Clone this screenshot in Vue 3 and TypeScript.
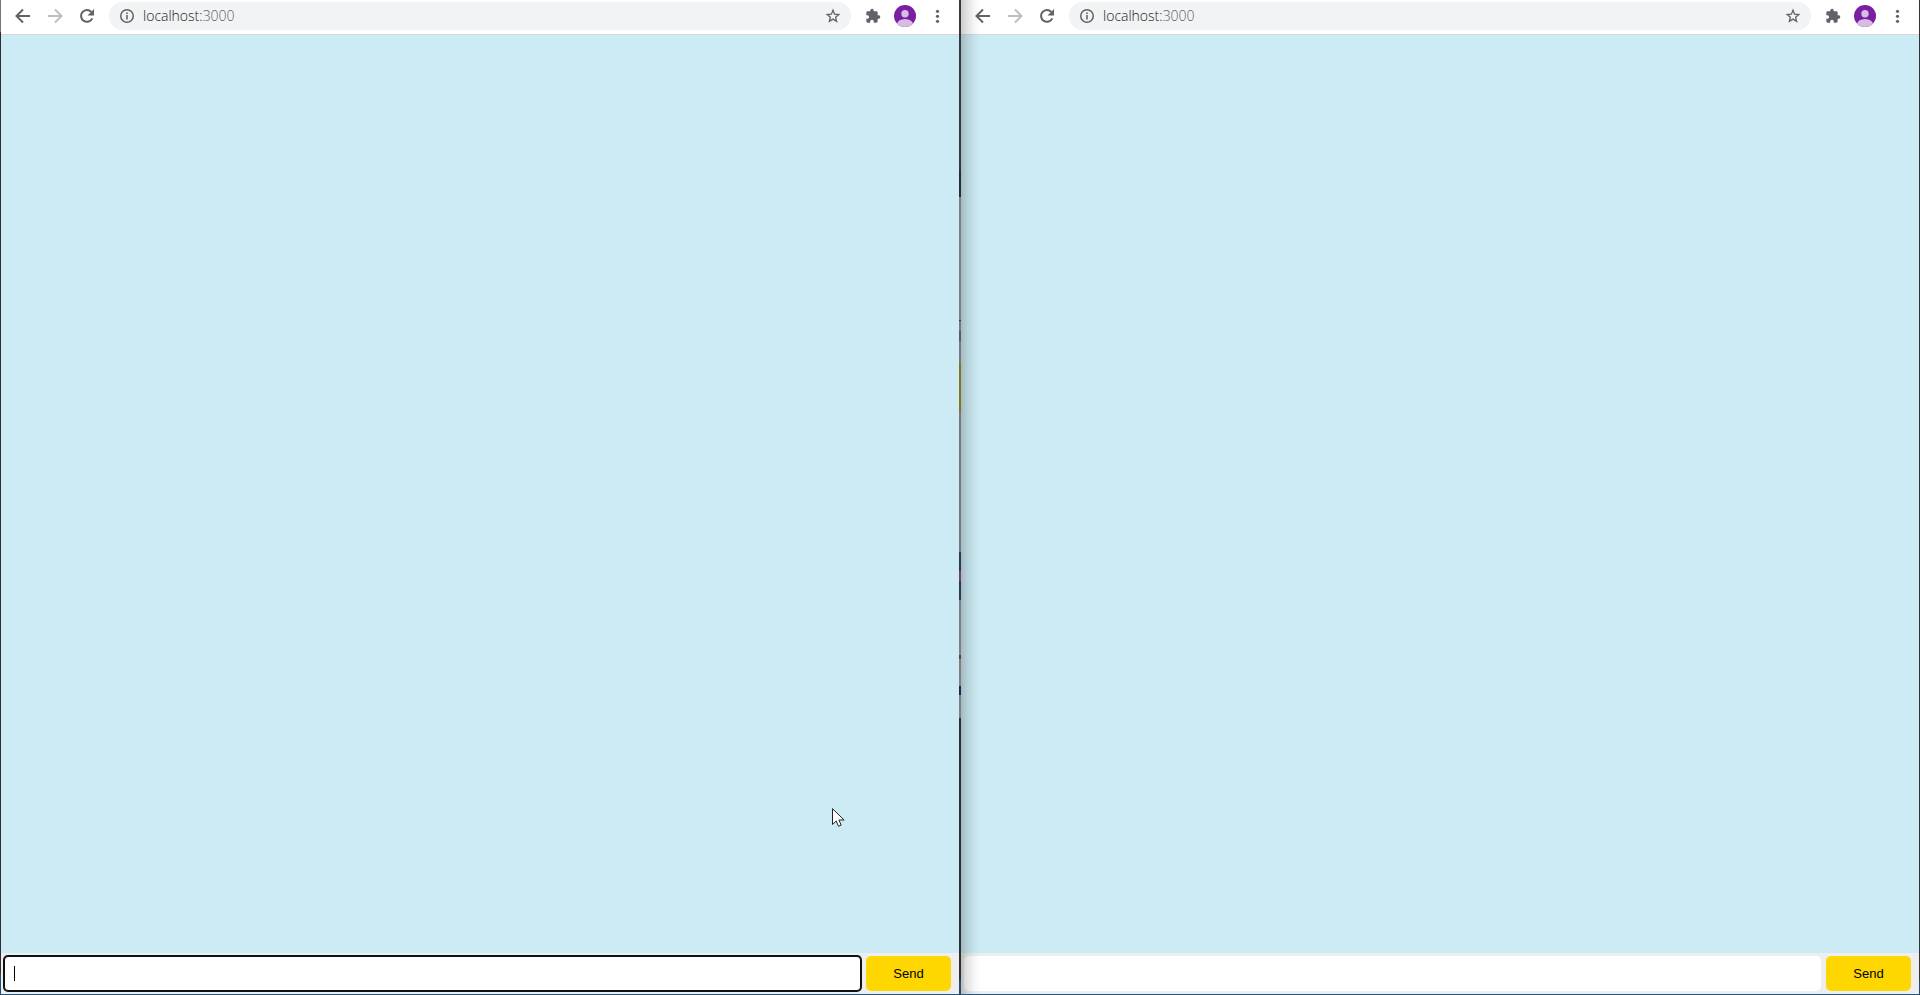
<script setup lang="ts">
import { ref } from 'vue'

interface Pane {
  id: string
  focused: boolean
}

const panes: Pane[] = [
  { id: 'left', focused: true },
  { id: 'right', focused: false },
]
const drafts = ref<Record<string, string>>({ left: '', right: '' })

function send(id: string) {
  drafts.value[id] = ''
}
</script>

<template>
  <main class="desktop">
    <section v-for="pane in panes" :key="pane.id" class="window" :class="pane.id">
      <header class="toolbar">
        <button class="tool" type="button" aria-label="Back">
          <svg width="20" height="20" viewBox="0 0 20 20"><path d="M17 10H4M10 3.5 3.5 10l6.500 6.500" fill="none" stroke="#5f6368" stroke-width="2" /></svg>
        </button>
        <button class="tool" type="button" aria-label="Forward" disabled>
          <svg width="20" height="20" viewBox="0 0 20 20"><path d="M3 10h13M10 3.500l6.500 6.500-6.500 6.500" fill="none" stroke="#bdbfc1" stroke-width="2" /></svg>
        </button>
        <button class="tool" type="button" aria-label="Reload">
          <svg width="20" height="20" viewBox="0 0 20 20"><path d="M15.300 12.300A5.900 5.900 0 1 1 14.300 5.900" fill="none" stroke="#5f6368" stroke-width="2" /><path d="M17 3v6.500h-6.500z" fill="#5f6368" /></svg>
        </button>
        <div class="address">
          <svg width="16" height="16" viewBox="0 0 16 16"><circle cx="8" cy="8" r="6.250" fill="none" stroke="#5f6368" stroke-width="1.500" /><path d="M7.200 7h1.600v4.500H7.200zM7.200 4.500h1.600V6H7.200z" fill="#5f6368" /></svg>
          <span class="url">localhost:<span class="port">3000</span></span>
          <button class="star" type="button" aria-label="Bookmark this page">
            <svg width="16" height="16" viewBox="0 0 16 16"><path d="m8 2.300 1.600 3.900 4.200.3-3.200 2.700 1 4.100L8 11.100l-3.600 2.200 1-4.100-3.200-2.700 4.200-.3z" fill="none" stroke="#5f6368" stroke-width="1.300" /></svg>
          </button>
        </div>
        <button class="tool" type="button" aria-label="Extensions">
          <svg width="16" height="16" viewBox="0 0 24 24"><path d="M20.500 11H19V7c0-1.100-.9-2-2-2h-4V3.500a2.500 2.500 0 0 0-5 0V5H4c-1.100 0-2 .9-2 2v3.800h1.500a2.700 2.700 0 0 1 0 5.400H2V20c0 1.100.9 2 2 2h3.800v-1.500a2.700 2.700 0 0 1 5.400 0V22H17c1.100 0 2-.9 2-2v-4h1.500a2.500 2.500 0 0 0 0-5z" fill="#5f6368" /></svg>
        </button>
        <button class="tool" type="button" aria-label="Profile">
          <svg width="22" height="22" viewBox="0 0 22 22">
            <clipPath :id="`avatar-${pane.id}`"><circle cx="11" cy="11" r="11" /></clipPath>
            <g :clip-path="`url(#avatar-${pane.id})`"><path d="M0 0h22v22H0z" fill="#7b1fa2" /><circle cx="11" cy="8.700" r="3.700" fill="#d7bce3" /><ellipse cx="11" cy="19.500" rx="8" ry="5.500" fill="#d7bce3" /></g>
          </svg>
        </button>
        <button class="tool" type="button" aria-label="Menu">
          <svg width="16" height="16" viewBox="0 0 16 16" fill="#5f6368"><circle cx="8.500" cy="3.300" r="1.600" /><circle cx="8.500" cy="8.300" r="1.600" /><circle cx="8.500" cy="13.300" r="1.600" /></svg>
        </button>
      </header>
      <div class="messages"></div>
      <form class="composer" @submit.prevent="send(pane.id)">
        <div class="field">
          <input v-model="drafts[pane.id]" class="message" :class="{ focused: pane.focused }" type="text" autocomplete="off" aria-label="Message" />
          <span v-if="pane.focused" class="caret"></span>
        </div>
        <button class="send" type="submit">Send</button>
      </form>
    </section>
    <svg class="pointer" width="14" height="21" viewBox="0 0 14 21"><path d="M.5.700v15.800l3.700-3.500 2.300 5.300 2.700-1.200-2.300-5.100h5.200z" fill="#fff" stroke="#222" /></svg>
  </main>
</template>

<style>
body {
  margin: 0;
}
</style>

<style scoped>
.desktop {
  position: relative;
  display: grid;
  grid-template-columns: 1fr 1fr;
  gap: 2px;
  box-sizing: border-box;
  height: 100vh;
  padding: 0 1px 1px;
  overflow: hidden;
  background:
    linear-gradient(#777 0 32px, #2e2e30 32px 973px, #1f4b70 973px) left / 1px 100% no-repeat,
    linear-gradient(#333 0 980px, #1f4b70 980px) right / 1px 100% no-repeat,
    linear-gradient(
      #38383a 0 170px, #292c30 170px 197px, #827f7e 197px 320px, #33365f 320px 321px,
      #77787c 321px 331px, #555c70 331px 341px, #77787c 341px 363px, #86741a 363px 412px,
      #777 412px 552px, #2d3654 552px 571px, #75405f 571px 581px, #2d3654 581px 600px,
      #827f7e 600px 655px, #783535 655px 659px, #827f7e 659px 686px, #1c294c 686px 695px,
      #827f7e 695px 718px, #2c2e30 718px 980px, #1f4b70 980px
    ) center / 2px 100% no-repeat,
    #23587f;
}

.window {
  position: relative;
  display: flex;
  flex-direction: column;
  min-width: 0;
  background: #cdebf5;
}

.right::before {
  content: '';
  position: absolute;
  z-index: 1;
  inset: 0 auto 0 0;
  width: 20px;
  background: linear-gradient(90deg, rgba(0, 0, 0, 0.2), rgba(0, 0, 0, 0.1) 35%, rgba(0, 0, 0, 0.03) 70%, transparent);
  pointer-events: none;
}

.toolbar {
  display: flex;
  align-items: center;
  gap: 4px;
  box-sizing: border-box;
  height: 35px;
  padding: 0 8px 2px;
  border-bottom: 1px solid #d5d9dc;
  background: #fff;
}

button {
  margin: 0;
  padding: 0;
  border: 0;
  background: none;
}

.tool {
  display: grid;
  place-items: center;
  flex: none;
  width: 28px;
  height: 28px;
}

.address {
  display: flex;
  flex: 1;
  align-items: center;
  gap: 8px;
  box-sizing: border-box;
  height: 28px;
  min-width: 0;
  margin: 0 4px;
  padding: 0 10px;
  border-radius: 14px;
  background: #f1f3f4;
}

.url {
  flex: 1;
  color: #202124;
  font: 300 14px/20px 'Open Sans', 'Noto Sans', sans-serif;
}

.port {
  color: #5f6368;
}

.star {
  display: grid;
}

.messages {
  flex: 1;
}

.composer {
  display: flex;
  gap: 5px;
  padding: 3px 8px 3px 3px;
  background: #eee;
}

.field {
  position: relative;
  flex: 1;
  display: flex;
}

.message {
  flex: 1;
  box-sizing: border-box;
  min-width: 0;
  height: 35px;
  padding: 0 10px;
  border: 0;
  border-radius: 5px;
  outline: 0;
  background: #fff;
  font: 13px 'Liberation Sans', Arial, sans-serif;
}

.focused {
  border: 1px solid #101010;
  border-radius: 4px;
  box-shadow: 0 0 0 1px #101010;
  caret-color: transparent;
}

.caret {
  position: absolute;
  top: 10px;
  left: 10px;
  width: 1px;
  height: 15px;
  background: #000;
}

.send {
  width: 85px;
  height: 35px;
  border-radius: 5px;
  background: #ffd700;
  color: #000;
  font: 13px 'Liberation Sans', Arial, sans-serif;
}

.pointer {
  position: absolute;
  top: 808px;
  left: 832px;
}
</style>
